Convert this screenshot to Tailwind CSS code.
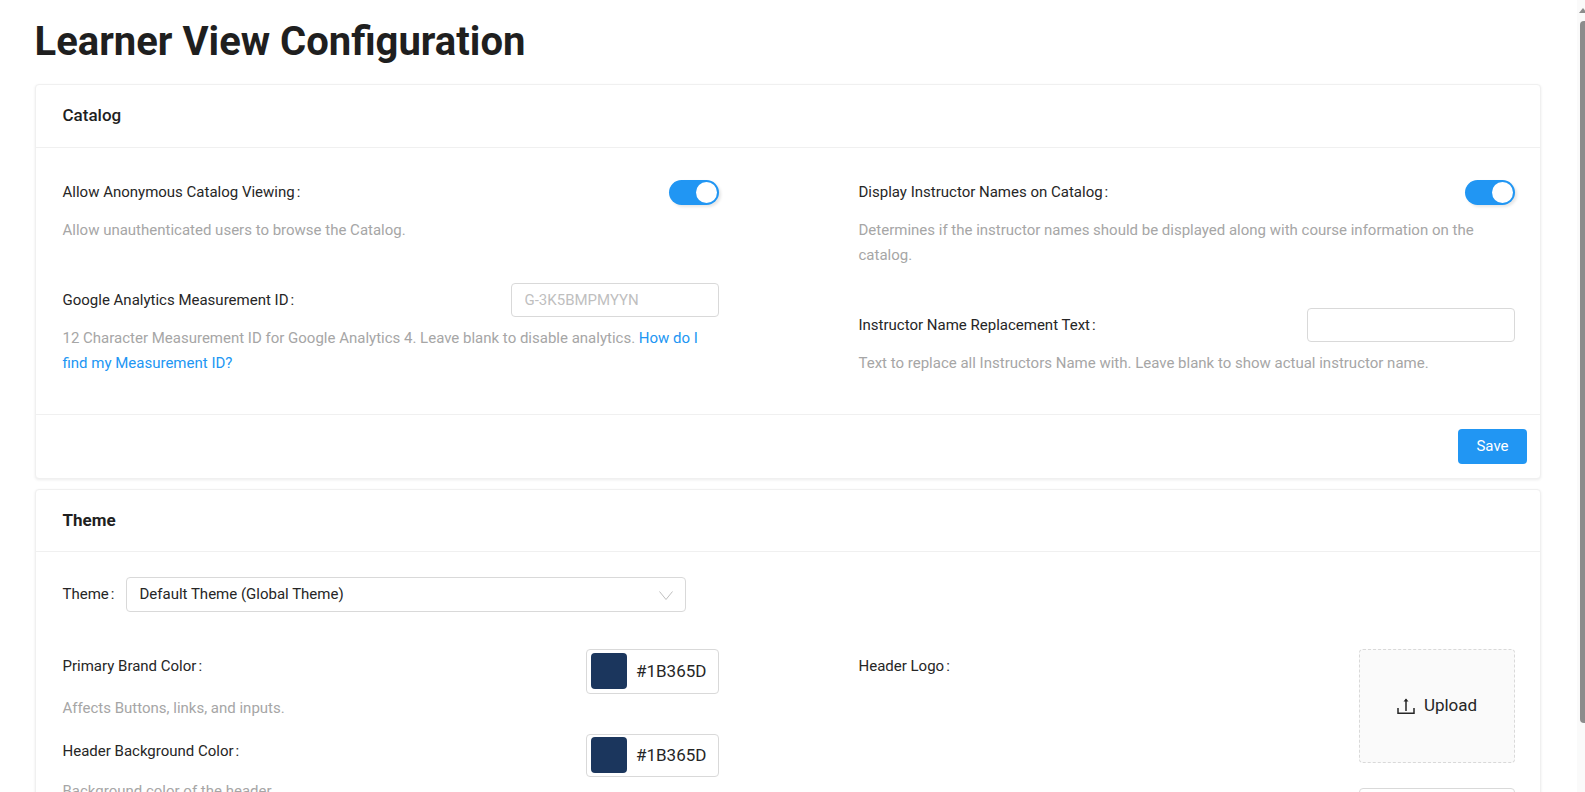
<!DOCTYPE html>
<html lang="en">
<head>
  <meta charset="UTF-8" />
  <title>Learner View Configuration</title>
  <script src="https://cdn.jsdelivr.net/npm/@tailwindcss/browser@4"></script>
</head>
<body class="relative h-[792px] overflow-hidden bg-white font-['Roboto',sans-serif] text-[15px] text-[#262626]">

  <!-- scrollbar -->
  <div class="absolute right-0 top-0 h-full w-2 bg-[#fafafa]">
    <div class="absolute left-[2px] top-[8px] h-0 w-0 border-x-[4px] border-b-[5px] border-x-transparent border-b-[#8c8c8c]"></div>
    <div class="absolute left-[3px] top-[21px] h-[702px] w-[5px] rounded-l bg-[#8c8c8c]"></div>
  </div>

  <main class="w-[1541px] pl-[34.5px]">
    <h1 class="pt-[17px] pb-[17px] text-[40px] leading-[50px] font-bold text-[#1f1f1f]">Learner View Configuration</h1>

    <!-- Catalog -->
    <section class="rounded border border-[#f0f0f0] bg-white shadow-[0_1px_3px_rgba(0,0,0,0.08)]">
      <h2 class="flex h-[63px] items-center border-b border-[#f0f0f0] px-[27px] text-[17px] font-medium text-[#1f1f1f]">Catalog</h2>
      <div class="grid h-[266px] grid-cols-[656.5px_656.5px] gap-x-[139.5px] px-[27px] pt-[32px]">
        <div>
          <div class="flex h-[25px] items-center justify-between">
            <label>Allow Anonymous Catalog Viewing<span class="mx-[2px]">:</span></label>
            <span class="relative h-[25px] w-[50px] rounded-full bg-[#2196f3] shadow-[2px_2px_3px_rgba(0,0,0,0.1)]"><span class="absolute right-[2px] top-[2px] h-[21px] w-[21px] rounded-full bg-white"></span></span>
          </div>
          <p class="mt-[12.5px] leading-[25px] text-[#a6a6a6]">Allow unauthenticated users to browse the Catalog.</p>
          <div class="mt-[40px] flex h-[34.5px] items-center justify-between">
            <label>Google Analytics Measurement ID<span class="mx-[2px]">:</span></label>
            <input class="h-full w-[208.5px] rounded border border-[#d9d9d9] px-[13px] placeholder-[#bfbfbf]" placeholder="G-3K5BMPMYYN" />
          </div>
          <p class="mt-[9px] leading-[24.5px] text-[#a6a6a6]">12 Character Measurement ID for Google Analytics 4. Leave blank to disable analytics. <a href="#" class="text-[#2196f3]">How do I find my Measurement ID?</a></p>
        </div>
        <div>
          <div class="flex h-[25px] items-center justify-between">
            <label>Display Instructor Names on Catalog<span class="mx-[2px]">:</span></label>
            <span class="relative h-[25px] w-[50px] rounded-full bg-[#2196f3] shadow-[2px_2px_3px_rgba(0,0,0,0.1)]"><span class="absolute right-[2px] top-[2px] h-[21px] w-[21px] rounded-full bg-white"></span></span>
          </div>
          <p class="mt-[12.5px] leading-[25px] text-[#a6a6a6]">Determines if the instructor names should be displayed along with course information on the catalog.</p>
          <div class="mt-[40px] flex h-[34.5px] items-center justify-between">
            <label>Instructor Name Replacement Text<span class="mx-[2px]">:</span></label>
            <input class="h-full w-[208.5px] rounded border border-[#d9d9d9] px-[13px]" />
          </div>
          <p class="mt-[9px] leading-[24.5px] text-[#a6a6a6]">Text to replace all Instructors Name with. Leave blank to show actual instructor name.</p>
        </div>
      </div>
      <div class="flex h-[64px] items-center justify-end border-t border-[#f0f0f0] px-[13px]">
        <button class="h-[35px] w-[69px] rounded bg-[#2196f3] text-white">Save</button>
      </div>
    </section>

    <!-- Theme -->
    <section class="mt-[10px] rounded border border-[#f0f0f0] bg-white shadow-[0_1px_3px_rgba(0,0,0,0.08)]">
      <h2 class="flex h-[62px] items-center border-b border-[#f0f0f0] px-[27px] text-[17px] font-bold text-[#1f1f1f]">Theme</h2>
      <div class="px-[27px] pt-[25px]">
        <div class="flex h-[35px] items-center">
          <label class="w-[63px] shrink-0">Theme<span class="mx-[2px]">:</span></label>
          <div class="flex h-full w-[560px] items-center justify-between rounded border border-[#d9d9d9] pl-[13px] pr-[12px]">
            <span>Default Theme (Global Theme)</span>
            <svg class="h-[14px] w-[14px] text-[#bfbfbf]" viewBox="0 0 14 14" fill="none" stroke="currentColor" stroke-width="1"><path d="M.5 3.5 7 11.5l6.500-8" /></svg>
          </div>
        </div>
        <div class="mt-[37px] grid grid-cols-[656.5px_656.5px] gap-x-[139.5px]">
          <div>
            <div class="flex h-[44.500px] items-start justify-between">
              <label class="leading-[34px]">Primary Brand Color<span class="mx-[2px]">:</span></label>
              <div class="flex h-full w-[133px] items-center gap-[9px] rounded border border-[#d9d9d9] pl-[4px]">
                <span class="h-[36px] w-[36px] rounded bg-[#1b365d]"></span>
                <span class="text-[17px]">#1B365D</span>
              </div>
            </div>
            <p class="mt-[2px] leading-[25px] text-[#a6a6a6]">Affects Buttons, links, and inputs.</p>
            <div class="mt-[13px] flex h-[43.500px] items-start justify-between">
              <label class="leading-[34px]">Header Background Color<span class="mx-[2px]">:</span></label>
              <div class="flex h-full w-[133px] items-center gap-[9px] rounded border border-[#d9d9d9] pl-[4px]">
                <span class="h-[36px] w-[36px] rounded bg-[#1b365d]"></span>
                <span class="text-[17px]">#1B365D</span>
              </div>
            </div>
            <p class="mt-[2px] leading-[25px] text-[#a6a6a6]">Background color of the header.</p>
          </div>
          <div>
            <div class="flex items-start justify-between">
              <label class="leading-[34px]">Header Logo<span class="mx-[2px]">:</span></label>
              <div class="flex h-[114px] w-[156px] items-center justify-center gap-[9px] rounded border border-dashed border-[#d9d9d9] bg-[#fafafa]">
                <svg class="h-[18px] w-[18px] text-[#262626]" viewBox="0 0 18 18" fill="none" stroke="currentColor" stroke-width="1.500"><path d="M9 14V2.500M1 11v5.200h16V11" /><path d="M6.500 4.500 9 1.500l2.500 3z" fill="currentColor" stroke="none" /></svg>
                <span class="text-[17px]">Upload</span>
              </div>
            </div>
            <div class="mt-[25px] ml-auto h-[40px] w-[156px] rounded border border-[#d9d9d9]"></div>
          </div>
        </div>
      </div>
    </section>
  </main>
</body>
</html>
